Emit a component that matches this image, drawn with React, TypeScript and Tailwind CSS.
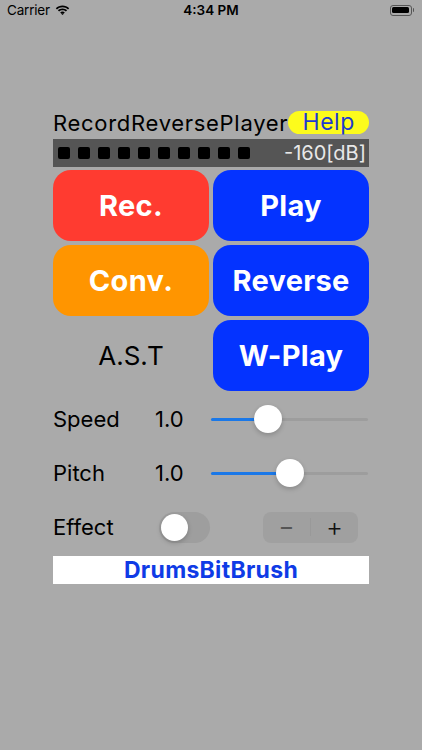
import React from 'react';

function Wifi() {
  return (
    <svg width="15" height="11" viewBox="0 0 15 11" fill="#000">
      <path d="M7.5 2.2c2.1 0 4 .8 5.5 2.2l1.2-1.2C12.4 1.4 10 .4 7.5.4S2.6 1.4.8 3.2L2 4.4c1.5-1.4 3.4-2.2 5.5-2.2z" />
      <path d="M7.5 5.2c1.3 0 2.5.5 3.4 1.3l1.2-1.2C10.9 4.1 9.3 3.4 7.5 3.4S4.1 4.1 2.9 5.3l1.2 1.2c.9-.8 2.1-1.3 3.4-1.3z" />
      <path d="M7.5 8.2c.5 0 .9.2 1.3.5L7.5 10 6.2 8.7c.4-.3.8-.5 1.3-.5z" />
      <path d="M7.5 6.6c.9 0 1.7.3 2.3.9L8.6 8.7c-.3-.3-.7-.5-1.1-.5s-.8.2-1.1.5L5.2 7.5c.6-.6 1.4-.9 2.3-.9z" />
    </svg>
  );
}

function Battery() {
  return (
    <div className="flex items-center">
      <div className="w-[22px] h-[11px] rounded-[3px] border border-[#555] p-[1.5px]">
        <div className="w-full h-full rounded-[1.5px] bg-black" />
      </div>
      <div className="w-[1.5px] h-[4px] rounded-r-sm bg-[#555] ml-[1px]" />
    </div>
  );
}

function Slider({ pos }: { pos: number }) {
  return (
    <div className="relative flex-1 h-[28px] mr-[1px]">
      <div className="absolute left-0 right-0 top-[12.5px] h-[3px] rounded-full bg-[#9d9d9d]" />
      <div className="absolute left-0 top-[12.5px] h-[3px] rounded-full bg-[#1a78e8]" style={{ width: pos }} />
      <div
        className="absolute top-0 w-[28px] h-[28px] rounded-full bg-white shadow-[0_2px_5px_rgba(0,0,0,0.2)]"
        style={{ left: pos - 14 }}
      />
    </div>
  );
}

const btn = 'flex items-center justify-center rounded-[18px] text-white font-bold text-[29px] tracking-[0.3px]';

export default function App() {
  return (
    <div className="w-[422px] h-[750px] bg-[#aaaaaa] font-['Inter',sans-serif] text-black">
      <div className="h-[20px] grid grid-cols-[1fr_auto_1fr] items-center px-[7px]">
        <div className="flex items-center gap-[5px] text-[13.5px] tracking-[-0.2px]">
          <span>Carrier</span>
          <Wifi />
        </div>
        <div className="text-[13.5px] font-semibold">4:34 PM</div>
        <div className="flex justify-end pr-[1px]">
          <Battery />
        </div>
      </div>

      <div className="w-[316px] mx-auto pt-[90px]">
        <div className="h-[25px] flex items-center justify-between">
          <span className="text-[22px] tracking-[0.7px] leading-none">RecordReversePlayer</span>
          <span className="w-[82px] h-[23px] rounded-full bg-[#fdfb1c] flex items-center justify-center text-[23px] tracking-[0.5px] leading-none text-[#1e3ccf]">
            Help
          </span>
        </div>

        <div className="mt-[4px] h-[28px] bg-[#555555] flex items-center pl-[5px] pr-[3px]">
          <div className="flex gap-[8px]">
            {Array.from({ length: 10 }).map((_, i) => (
              <div key={i} className="w-[12px] h-[12px] rounded-[2px] bg-black" />
            ))}
          </div>
          <span className="ml-auto text-[20px] leading-none text-[#e8e8e8]">-160[dB]</span>
        </div>

        <div className="mt-[3px] grid grid-cols-2 gap-[4px] auto-rows-[71px]">
          <div className={`${btn} bg-[#ff3b30]`}>Rec.</div>
          <div className={`${btn} bg-[#0433ff]`}>Play</div>
          <div className={`${btn} bg-[#ff9500]`}>Conv.</div>
          <div className={`${btn} bg-[#0433ff]`}>Reverse</div>
          <div className="flex items-center justify-center text-[26px]">A.S.T</div>
          <div className={`${btn} bg-[#0433ff]`}>W-Play</div>
        </div>

        <div className="mt-[8px] flex flex-col gap-[14px]">
          <div className="h-[40px] flex items-center text-[22px]">
            <span className="w-[102px]">Speed</span>
            <span className="w-[56px]">1.0</span>
            <Slider pos={57} />
          </div>
          <div className="h-[40px] flex items-center text-[22px]">
            <span className="w-[102px]">Pitch</span>
            <span className="w-[56px]">1.0</span>
            <Slider pos={79} />
          </div>
          <div className="h-[40px] flex items-center text-[22px]">
            <span className="w-[106px]">Effect</span>
            <div className="w-[51px] h-[31px] rounded-full bg-[#9e9e9e] p-[2px]">
              <div className="w-[27px] h-[27px] rounded-full bg-white shadow-[0_2px_5px_rgba(0,0,0,0.2)]" />
            </div>
            <div className="ml-[53px] w-[95px] h-[31px] rounded-[8px] bg-[#a0a0a0] flex items-center">
              <span className="flex-1 text-center text-[24px] leading-none text-[#555]">−</span>
              <div className="w-[1px] h-[18px] bg-[#999]" />
              <span className="flex-1 text-center text-[26px] font-light leading-none text-[#111]">+</span>
            </div>
          </div>
        </div>

        <div className="mt-[9px] h-[28px] bg-white flex items-center justify-center text-[23px] tracking-[0.3px] font-bold text-[#0f3be6]">
          DrumsBitBrush
        </div>
      </div>
    </div>
  );
}
